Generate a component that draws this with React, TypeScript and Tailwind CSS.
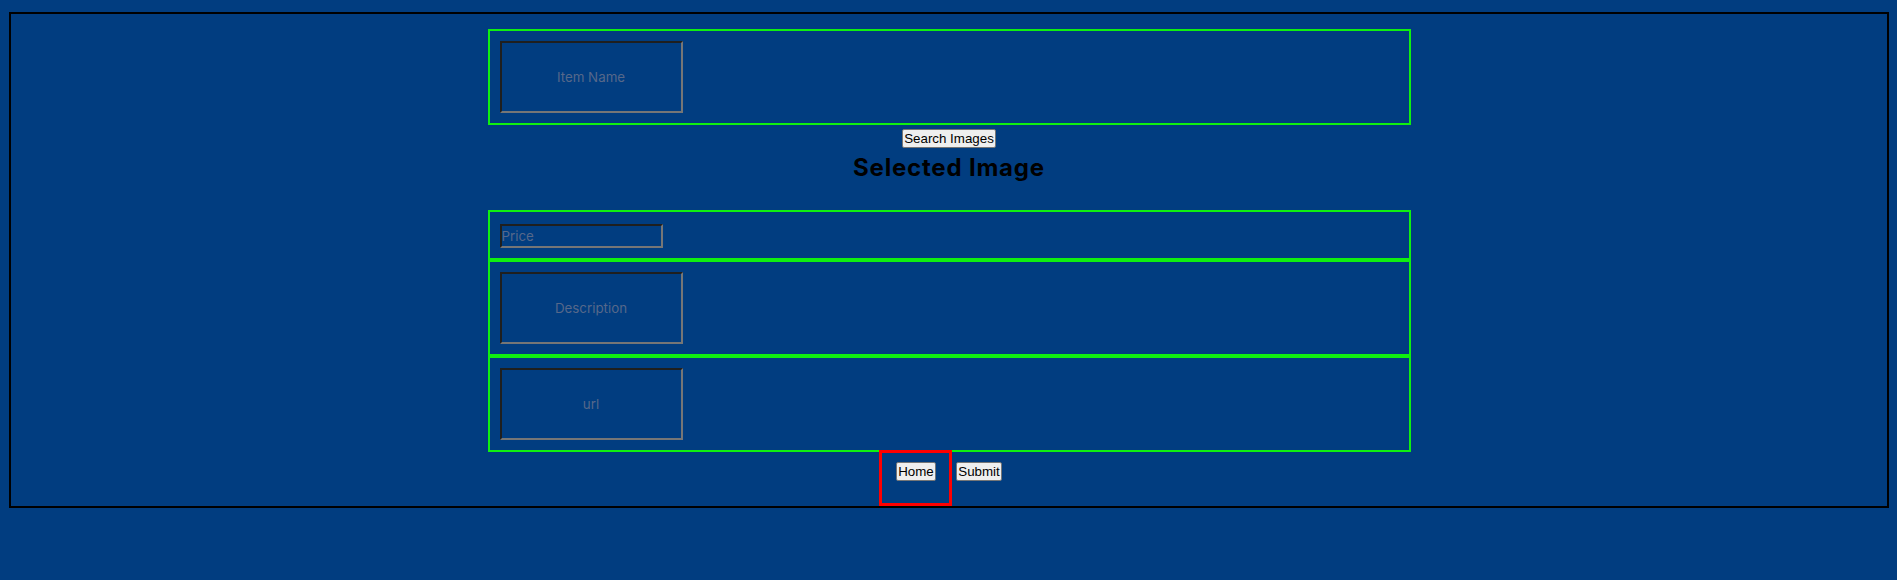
import { useState } from "react";

const fieldBorder =
  "border-2 border-t-[#1f1f1f] border-l-[#1f1f1f] border-b-[#767676] border-r-[#767676] bg-transparent outline-none";
const fieldText =
  "font-['Inter',sans-serif] text-[13.33px] text-white placeholder:text-[#56688a]";
const nativeButton =
  "h-[19px] px-[1px] border border-[#767676] rounded-[2px] bg-[#efefef] text-black font-['Liberation_Sans',Arial,sans-serif] text-[13.33px] leading-[15px]";

function FieldBox({ children, className = "" }: { children: React.ReactNode; className?: string }) {
  return (
    <div className={`w-[923px] border-2 border-[#10f010] ${className}`}>{children}</div>
  );
}

export default function App() {
  const [itemName, setItemName] = useState("");
  const [price, setPrice] = useState("");
  const [description, setDescription] = useState("");
  const [url, setUrl] = useState("");

  return (
    <div className="min-h-[580px] bg-[#013d80] pt-[12px] pl-[9px] pr-[8px]">
      <div className="border-2 border-black flex flex-col items-center pt-[15px]">
        <FieldBox className="p-[10px]">
          <input
            value={itemName}
            onChange={(e) => setItemName(e.target.value)}
            placeholder="Item Name"
            className={`block w-[183px] h-[72px] text-center ${fieldBorder} ${fieldText}`}
          />
        </FieldBox>

        <button className={`mt-[4px] ${nativeButton}`}>Search Images</button>

        <h2 className="mt-[6px] h-[28px] leading-[28px] font-['Inter',sans-serif] text-[24px] font-bold tracking-[0.8px] text-black">
          Selected Image
        </h2>

        <div className="mt-[28px] flex flex-col">
          <FieldBox className="h-[50px] pt-[12px] px-[10px]">
            <input
              value={price}
              onChange={(e) => setPrice(e.target.value)}
              placeholder="Price"
              className={`block w-[163px] h-[24px] px-0 ${fieldBorder} ${fieldText}`}
            />
          </FieldBox>
          <FieldBox className="p-[10px]">
            <input
              value={description}
              onChange={(e) => setDescription(e.target.value)}
              placeholder="Description"
              className={`block w-[183px] h-[72px] text-center ${fieldBorder} ${fieldText}`}
            />
          </FieldBox>
          <FieldBox className="p-[10px]">
            <input
              value={url}
              onChange={(e) => setUrl(e.target.value)}
              placeholder="url"
              className={`block w-[183px] h-[72px] text-center ${fieldBorder} ${fieldText}`}
            />
          </FieldBox>
        </div>

        <div className="-mt-[2px] flex items-start gap-[4px]">
          <div className="flex items-start w-[73px] h-[56px] border-[3px] border-[#ff0000] pt-[9px] pl-[14px]">
            <button className={`w-[40px] ${nativeButton}`}>Home</button>
          </div>
          <button className={`mt-[12px] w-[46px] ${nativeButton}`}>Submit</button>
          <div className="w-[13px]" />
        </div>
      </div>
    </div>
  );
}
